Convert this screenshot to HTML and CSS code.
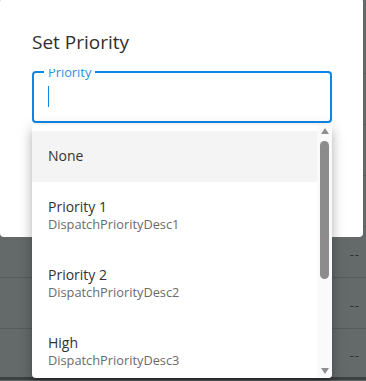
FILE: index.html
```html
<!DOCTYPE html>
<html lang="en">
<head>
    <meta charset="UTF-8">
    <meta name="viewport" content="width=device-width, initial-scale=1.0">
    <title>Set Priority</title>
    <link rel="stylesheet" href="styles.css">
</head>
<body>
    <!-- Page behind the dialog -->
    <div class="page">
        <div class="row"><span class="cell">--</span></div>
        <div class="row"><span class="cell">--</span></div>
        <div class="row"><span class="cell">--</span></div>
        <div class="row"><span class="cell">--</span></div>
        <div class="row"><span class="cell">--</span></div>
        <div class="row"><span class="cell">--</span></div>
        <div class="row last"><span class="cell">--</span></div>
    </div>

    <!-- Dialog -->
    <div class="dialog">
        <h2 class="dialog-title">Set Priority</h2>
        <div class="field-wrap">
            <div class="field">
                <span class="field-label">Priority</span>
                <span class="caret"></span>
            </div>
        </div>
    </div>

    <!-- Autocomplete menu -->
    <div class="menu">
        <ul class="menu-list">
            <li class="menu-item active">
                <div class="item-title">None</div>
            </li>
            <li class="menu-item">
                <div class="item-title">Priority 1</div>
                <div class="item-desc">DispatchPriorityDesc1</div>
            </li>
            <li class="menu-item">
                <div class="item-title">Priority 2</div>
                <div class="item-desc">DispatchPriorityDesc2</div>
            </li>
            <li class="menu-item">
                <div class="item-title">High</div>
                <div class="item-desc">DispatchPriorityDesc3</div>
            </li>
        </ul>
        <div class="scrollbar">
            <span class="arrow-up"></span>
            <span class="thumb"></span>
            <span class="arrow-down"></span>
        </div>
    </div>
</body>
</html>
```

FILE: styles.css
```css
/* Base */
:root {
    --primary: #0f85e4;
    --text: #333333;
    --muted: #6b6b6b;
    --overlay: #646a6a;
}

* {
    box-sizing: border-box;
}

body {
    margin: 0;
    font-family: 'Open Sans', sans-serif;
    background-color: var(--overlay);
    color: var(--text);
    height: 381px;
    overflow: hidden;
    position: relative;
}

/* Page behind the overlay */
.page {
    padding-top: 23px;
}

.row {
    height: 51px;
    display: flex;
    align-items: center;
    justify-content: flex-end;
    padding: 4px 6px 0 0;
    border-bottom: 1px solid rgba(0, 0, 0, 0.12);
}

.row.last {
    border-bottom: 3px solid #3c4141;
}

.cell {
    font-size: 13px;
    color: #2a2f2f;
    letter-spacing: 1px;
}

/* Dialog */
.dialog {
    position: absolute;
    top: -2px;
    left: 0;
    width: 363px;
    height: 239px;
    background: #ffffff;
    border-radius: 4px;
    padding: 31px 31px 0 32px;
}

.dialog-title {
    margin: 0;
    font-size: 19px;
    font-weight: 400;
    line-height: 26px;
    color: #2f2f2f;
}

.field-wrap {
    margin-top: 14px;
    padding-top: 2px;
    overflow: hidden;
}

.field {
    position: relative;
    width: 300px;
    height: 52px;
    border: 2px solid var(--primary);
    border-radius: 4px;
    padding: 13px 14px;
}

.field-label {
    position: absolute;
    top: -9px;
    left: 10px;
    padding: 0 4px;
    background: #ffffff;
    font-size: 12.8px;
    line-height: 16px;
    color: #2c8fe4;
}

.caret {
    display: block;
    width: 1px;
    height: 21px;
    background: var(--primary);
}

/* Menu */
.menu {
    position: absolute;
    top: 125px;
    left: 32px;
    width: 300px;
    height: 253px;
    display: flex;
    background: #ffffff;
    border-radius: 0 0 4px 4px;
    overflow: hidden;
    box-shadow: 0 5px 5px -3px rgba(0, 0, 0, 0.2), 0 8px 10px 1px rgba(0, 0, 0, 0.14), 0 3px 14px 2px rgba(0, 0, 0, 0.12);
}

.menu-list {
    flex: 1;
    margin: 0;
    padding: 6px 0 0;
    list-style: none;
    overflow: hidden;
}

.menu-item {
    padding: 15px 16px 18px;
}

.menu-item.active {
    background: #f4f4f4;
    padding-bottom: 16px;
}

.item-title {
    font-size: 14px;
    line-height: 20px;
    color: var(--text);
}

.item-desc {
    font-size: 12.8px;
    line-height: 15px;
    color: var(--muted);
}

/* Fake scrollbar */
.scrollbar {
    width: 15px;
    display: flex;
    flex-direction: column;
    align-items: center;
    background: #fafafa;
    padding: 3px 0 4px;
}

.arrow-up,
.arrow-down {
    width: 0;
    height: 0;
    border-left: 4.5px solid transparent;
    border-right: 4.5px solid transparent;
}

.arrow-up {
    border-bottom: 6px solid #8f8f8f;
}

.arrow-down {
    margin-top: auto;
    border-top: 6px solid #8f8f8f;
}

.thumb {
    width: 9px;
    height: 138px;
    margin-top: 7px;
    border-radius: 5px;
    background: #8c8c8c;
}
```
